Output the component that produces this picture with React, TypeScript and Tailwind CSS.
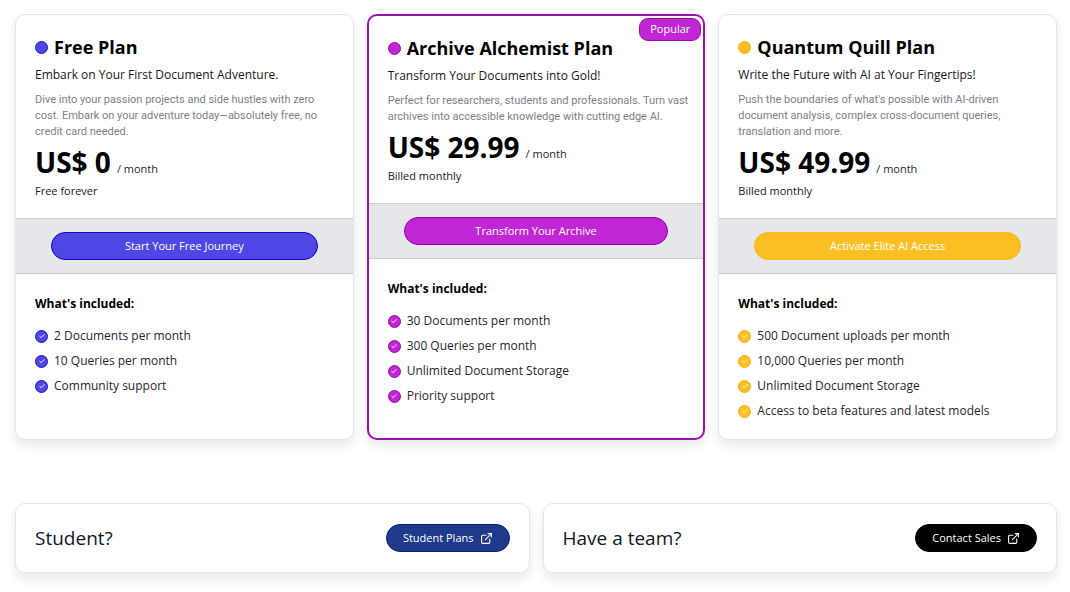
import React from 'react';
import { clsx } from 'clsx';
import { ExternalLink } from 'lucide-react';

interface Plan {
  name: string;
  tagline: string;
  description: string;
  price: string;
  billing: string;
  action: string;
  features: string[];
  popular?: boolean;
  dot: string;
  button: string;
}

const plans: Plan[] = [
  {
    name: 'Free Plan',
    tagline: 'Embark on Your First Document Adventure.',
    description:
      'Dive into your passion projects and side hustles with zero cost. Embark on your adventure today—absolutely free, no credit card needed.',
    price: 'US$ 0',
    billing: 'Free forever',
    action: 'Start Your Free Journey',
    features: ['2 Documents per month', '10 Queries per month', 'Community support'],
    dot: 'bg-[#4f46e5] border-[#1d14c4]',
    button: 'bg-[#4f46e5] border-[#1208b8]'
  },
  {
    name: 'Archive Alchemist Plan',
    tagline: 'Transform Your Documents into Gold!',
    description:
      'Perfect for researchers, students and professionals. Turn vast archives into accessible knowledge with cutting edge AI.',
    price: 'US$ 29.99',
    billing: 'Billed monthly',
    action: 'Transform Your Archive',
    features: [
      '30 Documents per month',
      '300 Queries per month',
      'Unlimited Document Storage',
      'Priority support'
    ],
    popular: true,
    dot: 'bg-[#c026d3] border-[#a006b0]',
    button: 'bg-[#c026d3] border-[#9400a4]'
  },
  {
    name: 'Quantum Quill Plan',
    tagline: 'Write the Future with AI at Your Fingertips!',
    description:
      "Push the boundaries of what's possible with AI-driven document analysis, complex cross-document queries, translation and more.",
    price: 'US$ 49.99',
    billing: 'Billed monthly',
    action: 'Activate Elite AI Access',
    features: [
      '500 Document uploads per month',
      '10,000 Queries per month',
      'Unlimited Document Storage',
      'Access to beta features and latest models'
    ],
    dot: 'bg-[#fbbf24] border-[#f5b010]',
    button: 'bg-[#fbbf24] border-[#fbb91c]'
  }
];

const contacts = [
  { title: 'Student?', action: 'Student Plans', button: 'bg-[#1e3a8a] border-[#06206e]' },
  { title: 'Have a team?', action: 'Contact Sales', button: 'bg-black border-black' }
];

function CheckBadge({ className }: { className: string }) {
  return (
    <span className={clsx('flex size-[13px] shrink-0 items-center justify-center rounded-full border', className)}>
      <svg viewBox="0 0 10 10" className="size-[10px]" fill="none" stroke="white" strokeOpacity="0.9" strokeLinecap="round" strokeLinejoin="round">
        <path d="M2.8 5.4 4.2 6.6 7.2 3.6" />
      </svg>
    </span>
  );
}

function PlanCard({ plan }: { plan: Plan }) {
  return (
    <section
      className={clsx(
        'relative rounded-[10px] bg-white shadow-[0_6px_12px_rgba(0,0,0,0.09)]',
        plan.popular ? 'border-2 border-[#a010b0]' : 'border border-[#e5e5e8]'
      )}
    >
      {plan.popular && (
        <span className="absolute top-[2px] right-[2px] flex h-[23px] items-center rounded-[9px] border border-[#9c08ac] bg-[#c026d3] px-[10px] text-[11px] text-white">
          Popular
        </span>
      )}

      <div className="px-[19px] pt-[18px] pb-[19px]">
        <h2 className="flex items-center gap-[6px] text-[18px] leading-[28px] font-bold text-black">
          <span className={clsx('size-[13px] shrink-0 rounded-full border', plan.dot)} />
          {plan.name}
        </h2>
        <p className="mt-1 text-[12px] leading-[20px] text-[#18181b]">{plan.tagline}</p>
        <p className="-mr-[6px] mt-[7px] font-['Roboto','Open_Sans',sans-serif] text-[11px] leading-[16px] text-[#7b7f8b]">
          {plan.description}
        </p>
        <p className="mt-[6px] flex items-baseline gap-[6px] text-black">
          <span className="text-[28px] leading-[32px] font-bold">{plan.price}</span>
          <span className="text-[11px] leading-[16px] text-[#27272a]">/ month</span>
        </p>
        <p className="mt-[5px] text-[11px] leading-[16px] text-[#18181b]">{plan.billing}</p>
      </div>

      <div className="border-y border-[#cbcdd3] bg-[#e5e7eb] px-[35px] py-[13px]">
        <button
          className={clsx('block h-7 w-full cursor-pointer rounded-full border text-[11px] text-white', plan.button)}
        >
          {plan.action}
        </button>
      </div>

      <div className="px-[19px] pt-[21px] pb-[18px]">
        <h3 className="text-[12px] leading-[18px] font-bold text-black">What's included:</h3>
        <ul className="mt-[13px] flex flex-col gap-[5px]">
          {plan.features.map((feature) => (
            <li key={feature} className="flex items-center gap-[6px] text-[12px] leading-[20px] text-[#27272a]">
              <CheckBadge className={plan.dot} />
              {feature}
            </li>
          ))}
        </ul>
      </div>
    </section>
  );
}

function App() {
  return (
    <main className="bg-white pt-[14px] pr-[13px] pb-[19px] pl-[15px] font-['Open_Sans','Noto_Sans',sans-serif]">
      <div className="grid grid-cols-3 gap-[13px]">
        {plans.map((plan) => (
          <PlanCard key={plan.name} plan={plan} />
        ))}
      </div>

      <div className="mt-[63px] grid grid-cols-2 gap-[13px]">
        {contacts.map((contact) => (
          <section
            key={contact.title}
            className="flex items-center justify-between rounded-[10px] border border-[#e5e5e8] bg-white px-[19px] py-5 shadow-[0_6px_12px_rgba(0,0,0,0.09)]"
          >
            <h2 className="text-[19px] leading-[28px] font-medium text-[#0f172a]">{contact.title}</h2>
            <button
              className={clsx(
                'flex h-7 cursor-pointer items-center gap-[6px] rounded-full border px-[16px] text-[11px] text-white',
                contact.button
              )}
            >
              {contact.action}
              <ExternalLink className="size-[13px]" />
            </button>
          </section>
        ))}
      </div>
    </main>
  );
}

export default App;
